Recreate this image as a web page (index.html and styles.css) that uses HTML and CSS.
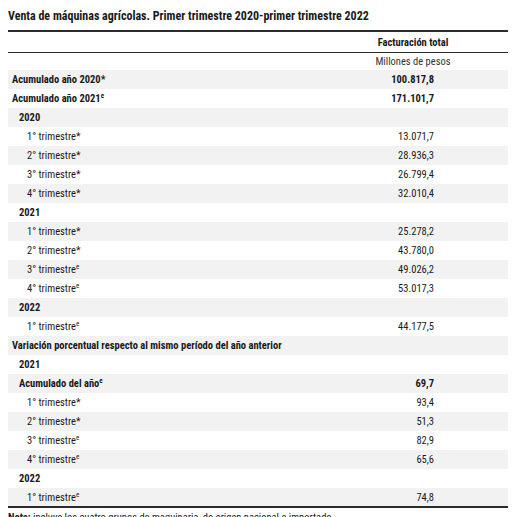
FILE: index.html
```html
<!DOCTYPE html>
<html lang="es">
<head>
<meta charset="utf-8">
<title>Venta de máquinas agrícolas</title>
<link rel="stylesheet" href="styles.css">
</head>
<body>
<h1 class="title">Venta de máquinas agrícolas. Primer trimestre 2020-primer trimestre 2022</h1>
<table class="data">
  <thead>
    <tr class="head-main"><th class="label"></th><th class="val">Facturación total</th></tr>
    <tr class="head-unit"><th class="label"></th><th class="val unit">Millones de pesos</th></tr>
  </thead>
  <tbody>
    <tr class="b"><td class="l0">Acumulado año 2020*</td><td class="num">100.817,8</td></tr>
    <tr class="b"><td class="l0">Acumulado año 2021<sup>e</sup></td><td class="num">171.101,7</td></tr>
    <tr class="b"><td class="l1">2020</td><td class="num"></td></tr>
    <tr><td class="l2">1° trimestre*</td><td class="num">13.071,7</td></tr>
    <tr><td class="l2">2° trimestre*</td><td class="num">28.936,3</td></tr>
    <tr><td class="l2">3° trimestre*</td><td class="num">26.799,4</td></tr>
    <tr><td class="l2">4° trimestre*</td><td class="num">32.010,4</td></tr>
    <tr class="b"><td class="l1">2021</td><td class="num"></td></tr>
    <tr><td class="l2">1° trimestre*</td><td class="num">25.278,2</td></tr>
    <tr><td class="l2">2° trimestre*</td><td class="num">43.780,0</td></tr>
    <tr><td class="l2">3° trimestre<sup>e</sup></td><td class="num">49.026,2</td></tr>
    <tr><td class="l2">4° trimestre<sup>e</sup></td><td class="num">53.017,3</td></tr>
    <tr class="b"><td class="l1">2022</td><td class="num"></td></tr>
    <tr><td class="l2">1° trimestre<sup>e</sup></td><td class="num">44.177,5</td></tr>
    <tr class="b"><td class="l0" colspan="2">Variación porcentual respecto al mismo período del año anterior</td></tr>
    <tr class="b"><td class="l1">2021</td><td class="num"></td></tr>
    <tr class="b"><td class="l1">Acumulado del año<sup>e</sup></td><td class="num">69,7</td></tr>
    <tr><td class="l2">1° trimestre*</td><td class="num">93,4</td></tr>
    <tr><td class="l2">2° trimestre*</td><td class="num">51,3</td></tr>
    <tr><td class="l2">3° trimestre<sup>e</sup></td><td class="num">82,9</td></tr>
    <tr><td class="l2">4° trimestre<sup>e</sup></td><td class="num">65,6</td></tr>
    <tr class="b"><td class="l1">2022</td><td class="num"></td></tr>
    <tr><td class="l2">1° trimestre<sup>e</sup></td><td class="num">74,8</td></tr>
  </tbody>
</table>
<p class="note"><strong>Nota:</strong> incluye los cuatro grupos de maquinaria, de origen nacional e importado.</p>
</body>
</html>
```

FILE: styles.css
```css
html, body {
  margin: 0;
  padding: 0;
  background: #ffffff;
}
body {
  padding: 8px;
  font-family: "Liberation Sans Narrow", "Arial Narrow", "Roboto Condensed", "Liberation Sans", sans-serif;
  font-stretch: condensed;
  color: #1a1a1a;
}
.title {
  margin: 0 0 6px 0;
  font-size: 12px;
  line-height: 16px;
  font-weight: bold;
}
.data {
  width: 500px;
  border-collapse: collapse;
  font-size: 10.5px;
}
.data th, .data td {
  padding: 0;
}
.head-main th {
  border-top: 2px solid #2b2b2b;
  border-bottom: 1.5px solid #2b2b2b;
  height: 20px;
  font-weight: bold;
}
.head-unit th {
  height: 17px;
  font-weight: normal;
}
.val {
  width: 190px;
  text-align: center;
}
.unit {
  color: #333;
}
.data tbody tr {
  height: 19px;
}
.data tbody tr:nth-child(odd) {
  background: #f2f2f2;
}
.data tbody tr:last-child {
  border-bottom: 2px solid #2b2b2b;
}
.l0 {
  padding-left: 4px !important;
  font-weight: bold;
}
.l1 {
  padding-left: 11px !important;
  font-weight: bold;
}
.l2 {
  padding-left: 19px !important;
}
.num {
  text-align: right;
  padding-right: 74px !important;
}
.b .num {
  font-weight: bold;
}
sup {
  font-size: 7px;
  line-height: 0;
  vertical-align: 4px;
}
.note {
  margin: 3px 0 0 0;
  font-size: 10.5px;
}
```
